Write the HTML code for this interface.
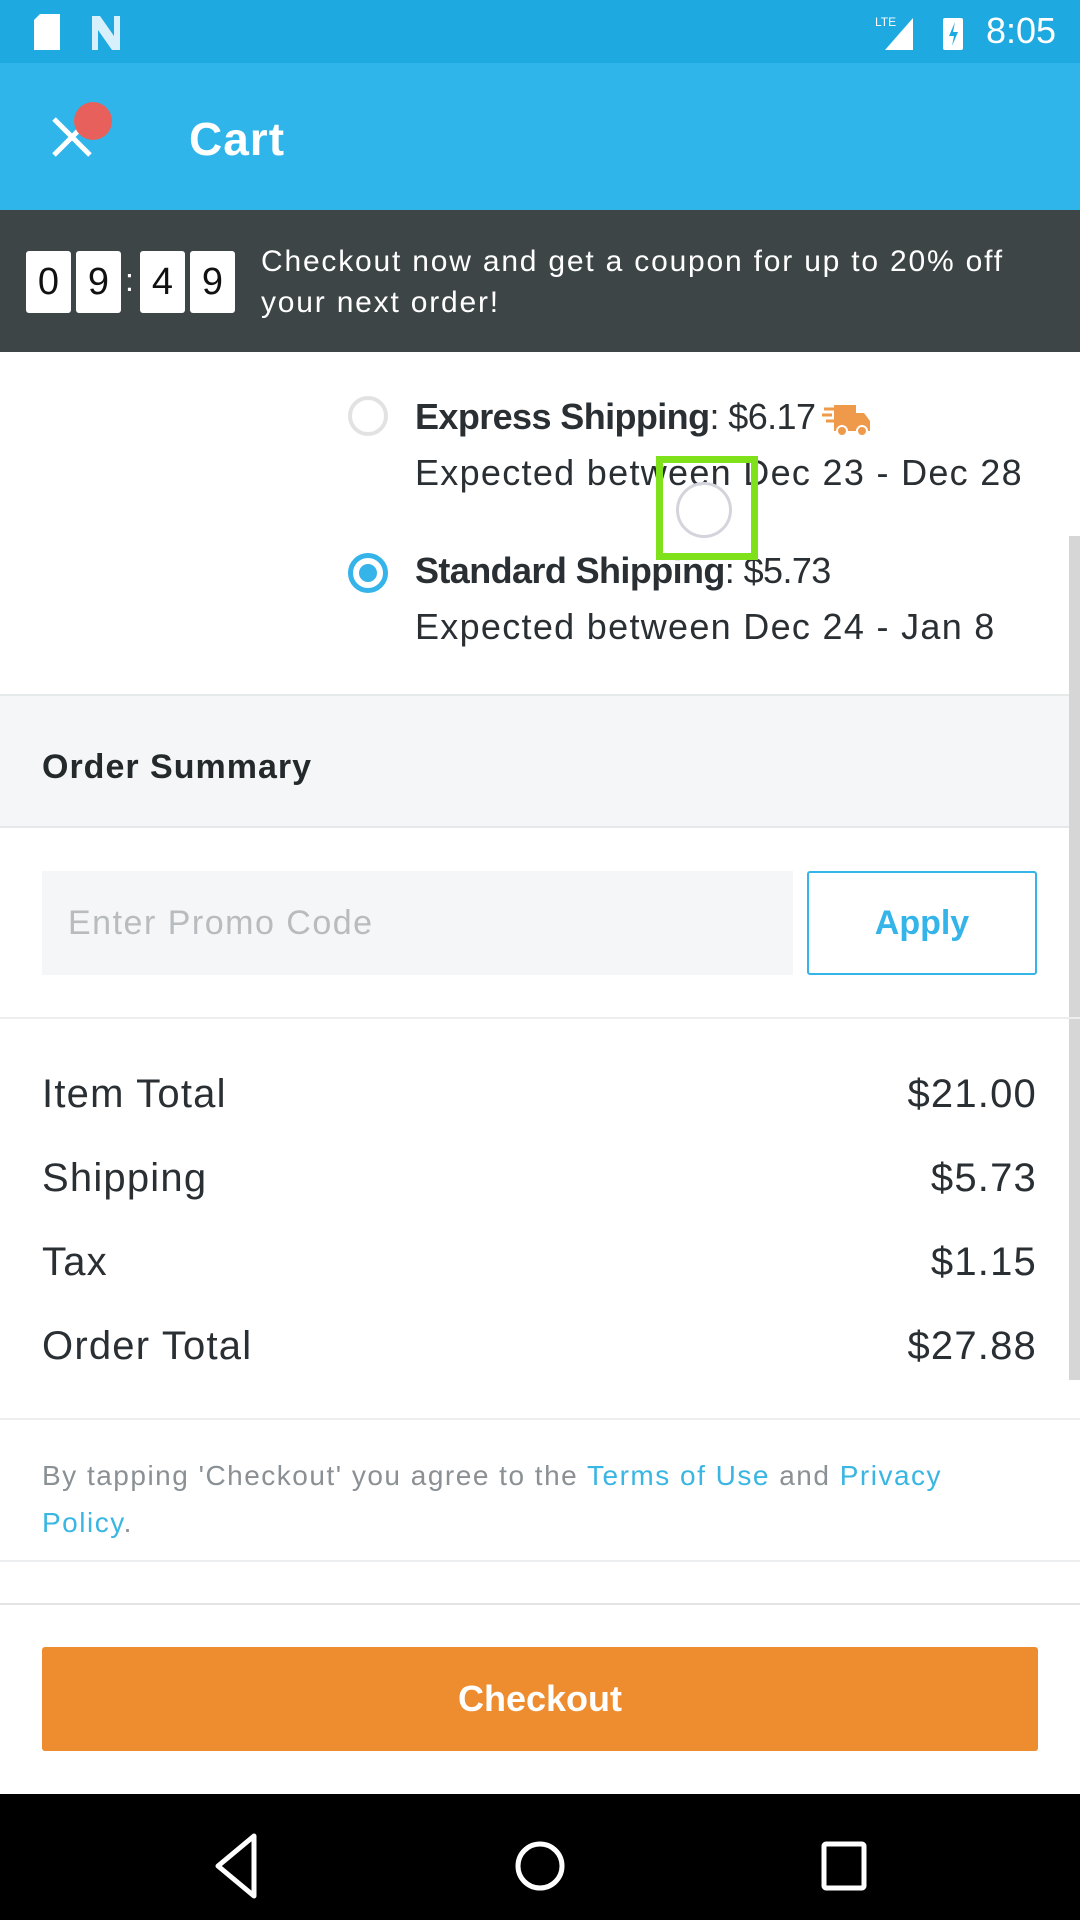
<!DOCTYPE html>
<html><head><meta charset="utf-8"><style>
*{margin:0;padding:0;box-sizing:border-box}
body{width:1080px;height:1920px;position:relative;background:#fff;font-family:"Liberation Sans",sans-serif;overflow:hidden;color:#2a2f33}
.a{position:absolute;white-space:nowrap}
.hr{position:absolute;left:0;width:1080px;height:2px;background:#eceeef}
.n{letter-spacing:1.2px}
</style></head><body>
<div class="a" style="left:0;top:0;width:1080px;height:63px;background:#1ea9e1"></div>
<svg class="a" style="left:30px;top:12px" width="110" height="40"><path d="M4 8 L10 2 H30 V38 H4 Z" fill="#fff"/><path d="M62 4 h8 l14 20 V4 h6 v34 h-8 L68 18 v20 h-6z" fill="#d8f0fb"/></svg>
<svg class="a" style="left:875px;top:12px" width="100" height="40"><path d="M10 38 L38 6 V38Z" fill="#fff"/><text x="0" y="14" font-size="12" fill="#fff" font-family="Liberation Sans">LTE</text><rect x="68" y="6" width="20" height="32" rx="2" fill="#fff"/><path d="M80 10 l-6 14 h5 l-2 10 6-14 h-5z" fill="#1ea9e1"/></svg>
<div class="a" style="left:986px;top:10px;font-size:36px;color:#fff">8:05</div>
<div class="a" style="left:0;top:63px;width:1080px;height:147px;background:#2fb5ea"></div>
<svg class="a" style="left:50px;top:115px" width="50" height="45"><path d="M4 4 L40 40 M40 4 L4 40" stroke="#fff" stroke-width="5"/></svg>
<div class="a" style="left:74px;top:102px;width:38px;height:38px;border-radius:50%;background:#e8605c"></div>
<div class="a" style="left:189px;top:112px;font-size:46px;font-weight:bold;color:#fff;letter-spacing:1px">Cart</div>
<div class="a" style="left:0;top:210px;width:1080px;height:142px;background:#3d4546"></div>
<div class="a" style="left:26px;top:251px;width:45px;height:62px;background:#fff;border-radius:3px;font-size:38px;text-align:center;line-height:62px;color:#111">0</div>
<div class="a" style="left:76px;top:251px;width:45px;height:62px;background:#fff;border-radius:3px;font-size:38px;text-align:center;line-height:62px;color:#111">9</div>
<div class="a" style="left:125px;top:262px;font-size:32px;color:#fff">:</div>
<div class="a" style="left:140px;top:251px;width:45px;height:62px;background:#fff;border-radius:3px;font-size:38px;text-align:center;line-height:62px;color:#111">4</div>
<div class="a" style="left:190px;top:251px;width:45px;height:62px;background:#fff;border-radius:3px;font-size:38px;text-align:center;line-height:62px;color:#111">9</div>
<div class="a" style="left:261px;top:241px;font-size:30px;line-height:41px;color:#fff;letter-spacing:1.8px">Checkout now and get a coupon for up to 20% off<br>your next order!</div>

<div class="a" style="left:348px;top:396px;width:40px;height:40px;border-radius:50%;border:4px solid #e2e2e2"></div>
<div class="a" style="left:415px;top:396px;font-size:36px;letter-spacing:-0.6px"><b>Express Shipping</b>: $6.17</div>
<svg class="a" style="left:822px;top:403px" width="50" height="34"><path d="M2 6h10M0 12h10M4 18h8" stroke="#ee9a4a" stroke-width="3"/><path d="M12 2h22v8h8l6 8v10H12z" fill="#ee9a4a"/><circle cx="20" cy="28" r="5" fill="#ee9a4a" stroke="#fff" stroke-width="2"/><circle cx="40" cy="28" r="5" fill="#ee9a4a" stroke="#fff" stroke-width="2"/></svg>
<div class="a" style="left:415px;top:452px;font-size:36px;letter-spacing:1.3px">Expected between Dec 23 - Dec 28</div>
<div class="a" style="left:348px;top:553px;width:40px;height:40px;border-radius:50%;border:5px solid #34b4e8;background:#fff"><div style="margin:6px;width:18px;height:18px;border-radius:50%;background:#34b4e8"></div></div>
<div class="a" style="left:415px;top:550px;font-size:36px;letter-spacing:-0.6px"><b>Standard Shipping</b>: $5.73</div>
<div class="a" style="left:415px;top:606px;font-size:36px;letter-spacing:1.3px">Expected between Dec 24 - Jan 8</div>
<div class="a" style="left:656px;top:456px;width:102px;height:104px;border:7px solid #7ee11a"></div>
<div class="a" style="left:676px;top:482px;width:56px;height:56px;border-radius:50%;border:3px solid #d4d4dc"></div>
<div class="a" style="left:1069px;top:536px;width:11px;height:844px;background:#d6d6d6"></div>

<div class="a" style="left:0;top:694px;width:1069px;height:134px;background:#f4f6f7;border-top:2px solid #e6e9ea;border-bottom:2px solid #e6e9ea"></div>
<div class="a" style="left:42px;top:748px;font-size:34px;font-weight:bold;color:#24292c;letter-spacing:1px">Order Summary</div>
<div class="a" style="left:42px;top:871px;width:751px;height:104px;background:#f4f6f7"></div>
<div class="a" style="left:68px;top:904px;font-size:34px;color:#b8bcbf;letter-spacing:1.5px">Enter Promo Code</div>
<div class="a" style="left:807px;top:871px;width:230px;height:104px;border:2px solid #34b4e8;border-radius:3px;font-size:34px;font-weight:bold;color:#34b4e8;text-align:center;line-height:100px">Apply</div>
<div class="hr" style="top:1017px"></div>
<div class="a n" style="left:42px;top:1072px;font-size:40px">Item Total</div>
<div class="a n" style="right:43px;top:1072px;font-size:40px">$21.00</div>
<div class="a n" style="left:42px;top:1156px;font-size:40px">Shipping</div>
<div class="a n" style="right:43px;top:1156px;font-size:40px">$5.73</div>
<div class="a n" style="left:42px;top:1240px;font-size:40px">Tax</div>
<div class="a n" style="right:43px;top:1240px;font-size:40px">$1.15</div>
<div class="a n" style="left:42px;top:1324px;font-size:40px">Order Total</div>
<div class="a n" style="right:43px;top:1324px;font-size:40px">$27.88</div>
<div class="hr" style="top:1418px"></div>
<div class="a" style="left:42px;top:1452px;font-size:28px;line-height:47px;color:#8a9094;letter-spacing:1.5px">By tapping 'Checkout' you agree to the <span style="color:#3ab6e2">Terms of Use</span> and <span style="color:#3ab6e2">Privacy</span><br><span style="color:#3ab6e2">Policy</span>.</div>
<div class="hr" style="top:1560px"></div>
<div class="hr" style="top:1603px;background:#e2e4e5"></div>
<div class="a" style="left:42px;top:1647px;width:996px;height:104px;background:#ee8d2f;border-radius:3px;font-size:36px;font-weight:bold;color:#fff;text-align:center;line-height:104px">Checkout</div>
<div class="a" style="left:0;top:1794px;width:1080px;height:126px;background:#000"></div>
<svg class="a" style="left:0;top:1794px" width="1080" height="126"><path d="M254 42 L218 72 L254 102Z" fill="none" stroke="#fff" stroke-width="5" stroke-linejoin="round"/><circle cx="540" cy="72" r="22" fill="none" stroke="#fff" stroke-width="5"/><rect x="824" y="50" width="40" height="44" rx="2" fill="none" stroke="#fff" stroke-width="5"/></svg>
</body></html>
